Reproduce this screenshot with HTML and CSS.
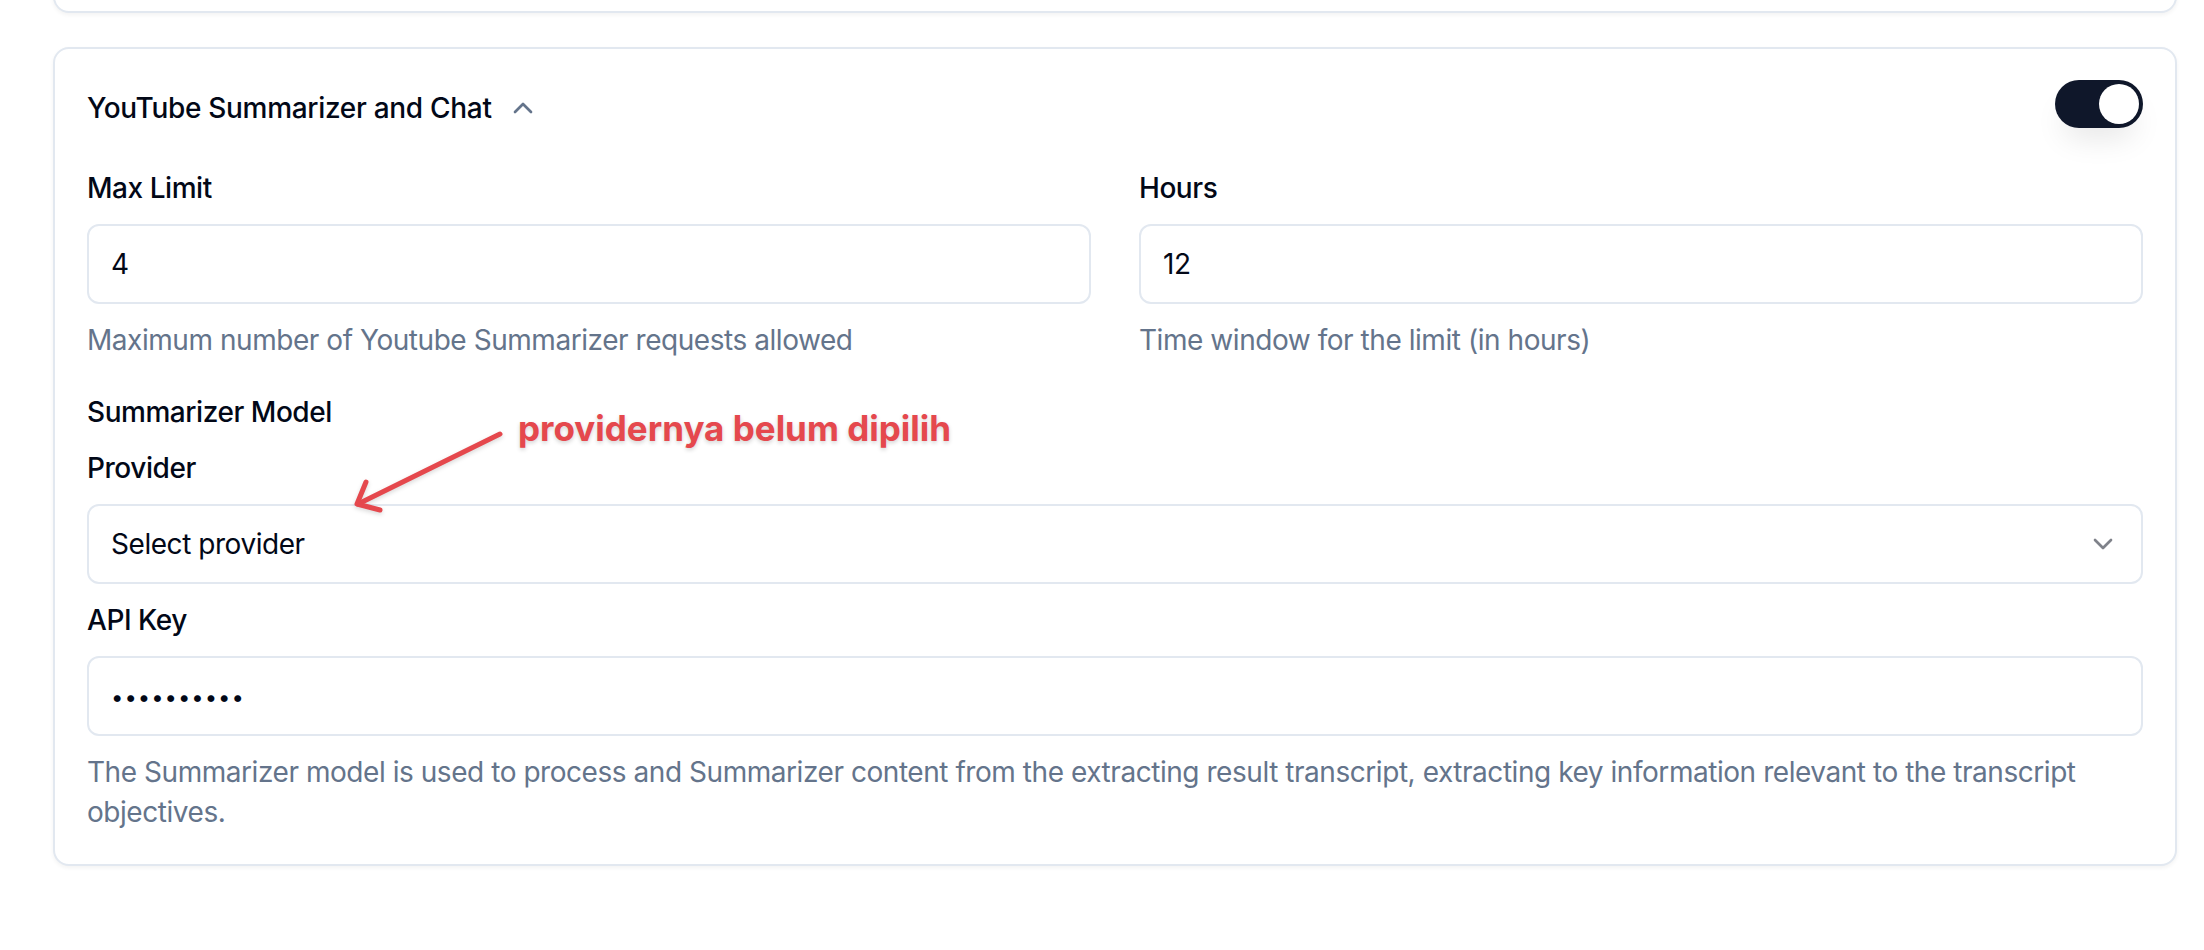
FILE: index.html
```html
<!DOCTYPE html>
<html lang="en">
<head>
<meta charset="utf-8">
<title>YouTube Summarizer and Chat</title>
<link rel="stylesheet" href="styles.css">
</head>
<body>
<div class="page">
  <section class="card card-prev"></section>

  <section class="card">
    <div class="card-head">
      <div class="title-wrap">
        <h3 class="title">YouTube Summarizer and Chat</h3>
        <svg class="icon icon-up" viewBox="0 0 24 24" fill="none" stroke="currentColor" stroke-width="2" stroke-linecap="round" stroke-linejoin="round"><path d="m18 15-6-6-6 6"/></svg>
      </div>
      <button class="switch" type="button" aria-checked="true"><span class="knob"></span></button>
    </div>

    <div class="grid2">
      <div class="field">
        <label class="label">Max Limit</label>
        <div class="input">4</div>
        <p class="help">Maximum number of Youtube Summarizer requests allowed</p>
      </div>
      <div class="field">
        <label class="label">Hours</label>
        <div class="input">12</div>
        <p class="help">Time window for the limit (in hours)</p>
      </div>
    </div>

    <div class="model">
      <div class="label">Summarizer Model</div>
      <label class="label">Provider</label>
      <div class="input select">
        <span>Select provider</span>
        <svg class="icon icon-down" viewBox="0 0 24 24" fill="none" stroke="currentColor" stroke-width="2" stroke-linecap="round" stroke-linejoin="round"><path d="m6 9 6 6 6-6"/></svg>
      </div>
      <label class="label">API Key</label>
      <div class="input"><span class="dots">••••••••••</span></div>
      <p class="help">The Summarizer model is used to process and Summarizer content from the extracting result transcript, extracting key information relevant to the transcript objectives.</p>
    </div>
  </section>

  <div class="annot">
    <svg class="annot-arrow" viewBox="0 0 160 90" fill="none" stroke="#e5484d" stroke-width="5" stroke-linecap="round" stroke-linejoin="round">
      <path d="M150 8 L8 78"/>
      <path d="M16 56 L7 78 L30 84"/>
    </svg>
    <span class="annot-text">providernya belum dipilih</span>
  </div>
</div>
</body>
</html>
```

FILE: styles.css
```css
* { box-sizing: border-box; }
html, body { margin: 0; padding: 0; background: #ffffff; }
body {
  font-family: Inter, "Noto Sans", "Liberation Sans", sans-serif;
  color: #020817;
  font-size: 28px;
  line-height: 40px;
  letter-spacing: -0.45px;
}
.page {
  position: relative;
  height: 950px;
  overflow: hidden;
  padding: 0 27px 0 53px;
  display: flex;
  flex-direction: column;
  gap: 34px;
}
.card {
  background: #fff;
  border: 2px solid #e2e8f0;
  border-radius: 16px;
  box-shadow: 0 2px 4px rgba(0, 0, 0, 0.05);
  padding: 32px 32px 32px;
}
.card-prev {
  height: 60px;
  padding: 0;
  margin-top: -47px;
  flex: none;
}
.card-head {
  display: flex;
  justify-content: space-between;
  align-items: flex-start;
  height: 48px;
}
.title-wrap {
  display: flex;
  align-items: center;
  gap: 15px;
  padding-top: 7px;
}
.title {
  margin: 0;
  font-size: 28px;
  font-weight: 500;
  line-height: 40px;
  letter-spacing: -0.3px;
}
.icon { width: 32px; height: 32px; flex: none; display: block; }
.icon-up { color: #64748b; }
.icon-down { color: #020817; opacity: 0.5; }
.switch {
  width: 88px;
  height: 48px;
  margin-top: -1px;
  border: none;
  border-radius: 999px;
  background: #0f172a;
  padding: 4px;
  display: flex;
  justify-content: flex-end;
  box-shadow: 0 18px 30px -8px rgba(0, 0, 0, 0.10);
}
.knob {
  width: 40px;
  height: 40px;
  border-radius: 50%;
  background: #fff;
  display: block;
}
.grid2 {
  margin-top: 39px;
  display: grid;
  grid-template-columns: 1fr 1fr;
  gap: 48px;
}
.field, .model {
  display: flex;
  flex-direction: column;
  gap: 16px;
}
.model { margin-top: 32px; }
.label {
  font-weight: 500;
  display: block;
}
.input {
  height: 80px;
  border: 2px solid #e2e8f0;
  border-radius: 12px;
  padding: 0 22px;
  display: flex;
  align-items: center;
  background: #fff;
}
.select { justify-content: space-between; }
.dots {
  font-size: 22px;
  letter-spacing: 1px;
  padding-top: 2px;
}
.help {
  margin: 0;
  color: #64748b;
}
.annot {
  position: absolute;
  left: 0;
  top: 0;
  width: 0;
  height: 0;
}
.annot-arrow {
  position: absolute;
  left: 350px;
  top: 426px;
  width: 160px;
  height: 90px;
  overflow: visible;
  filter: drop-shadow(0 2px 2px rgba(0, 0, 0, 0.15));
}
.annot-text {
  position: absolute;
  left: 518px;
  top: 411px;
  white-space: nowrap;
  font-size: 35px;
  line-height: 34px;
  font-weight: 700;
  letter-spacing: 0;
  color: #e5484d;
  text-shadow: 0 2px 4px rgba(0, 0, 0, 0.18);
}
```
